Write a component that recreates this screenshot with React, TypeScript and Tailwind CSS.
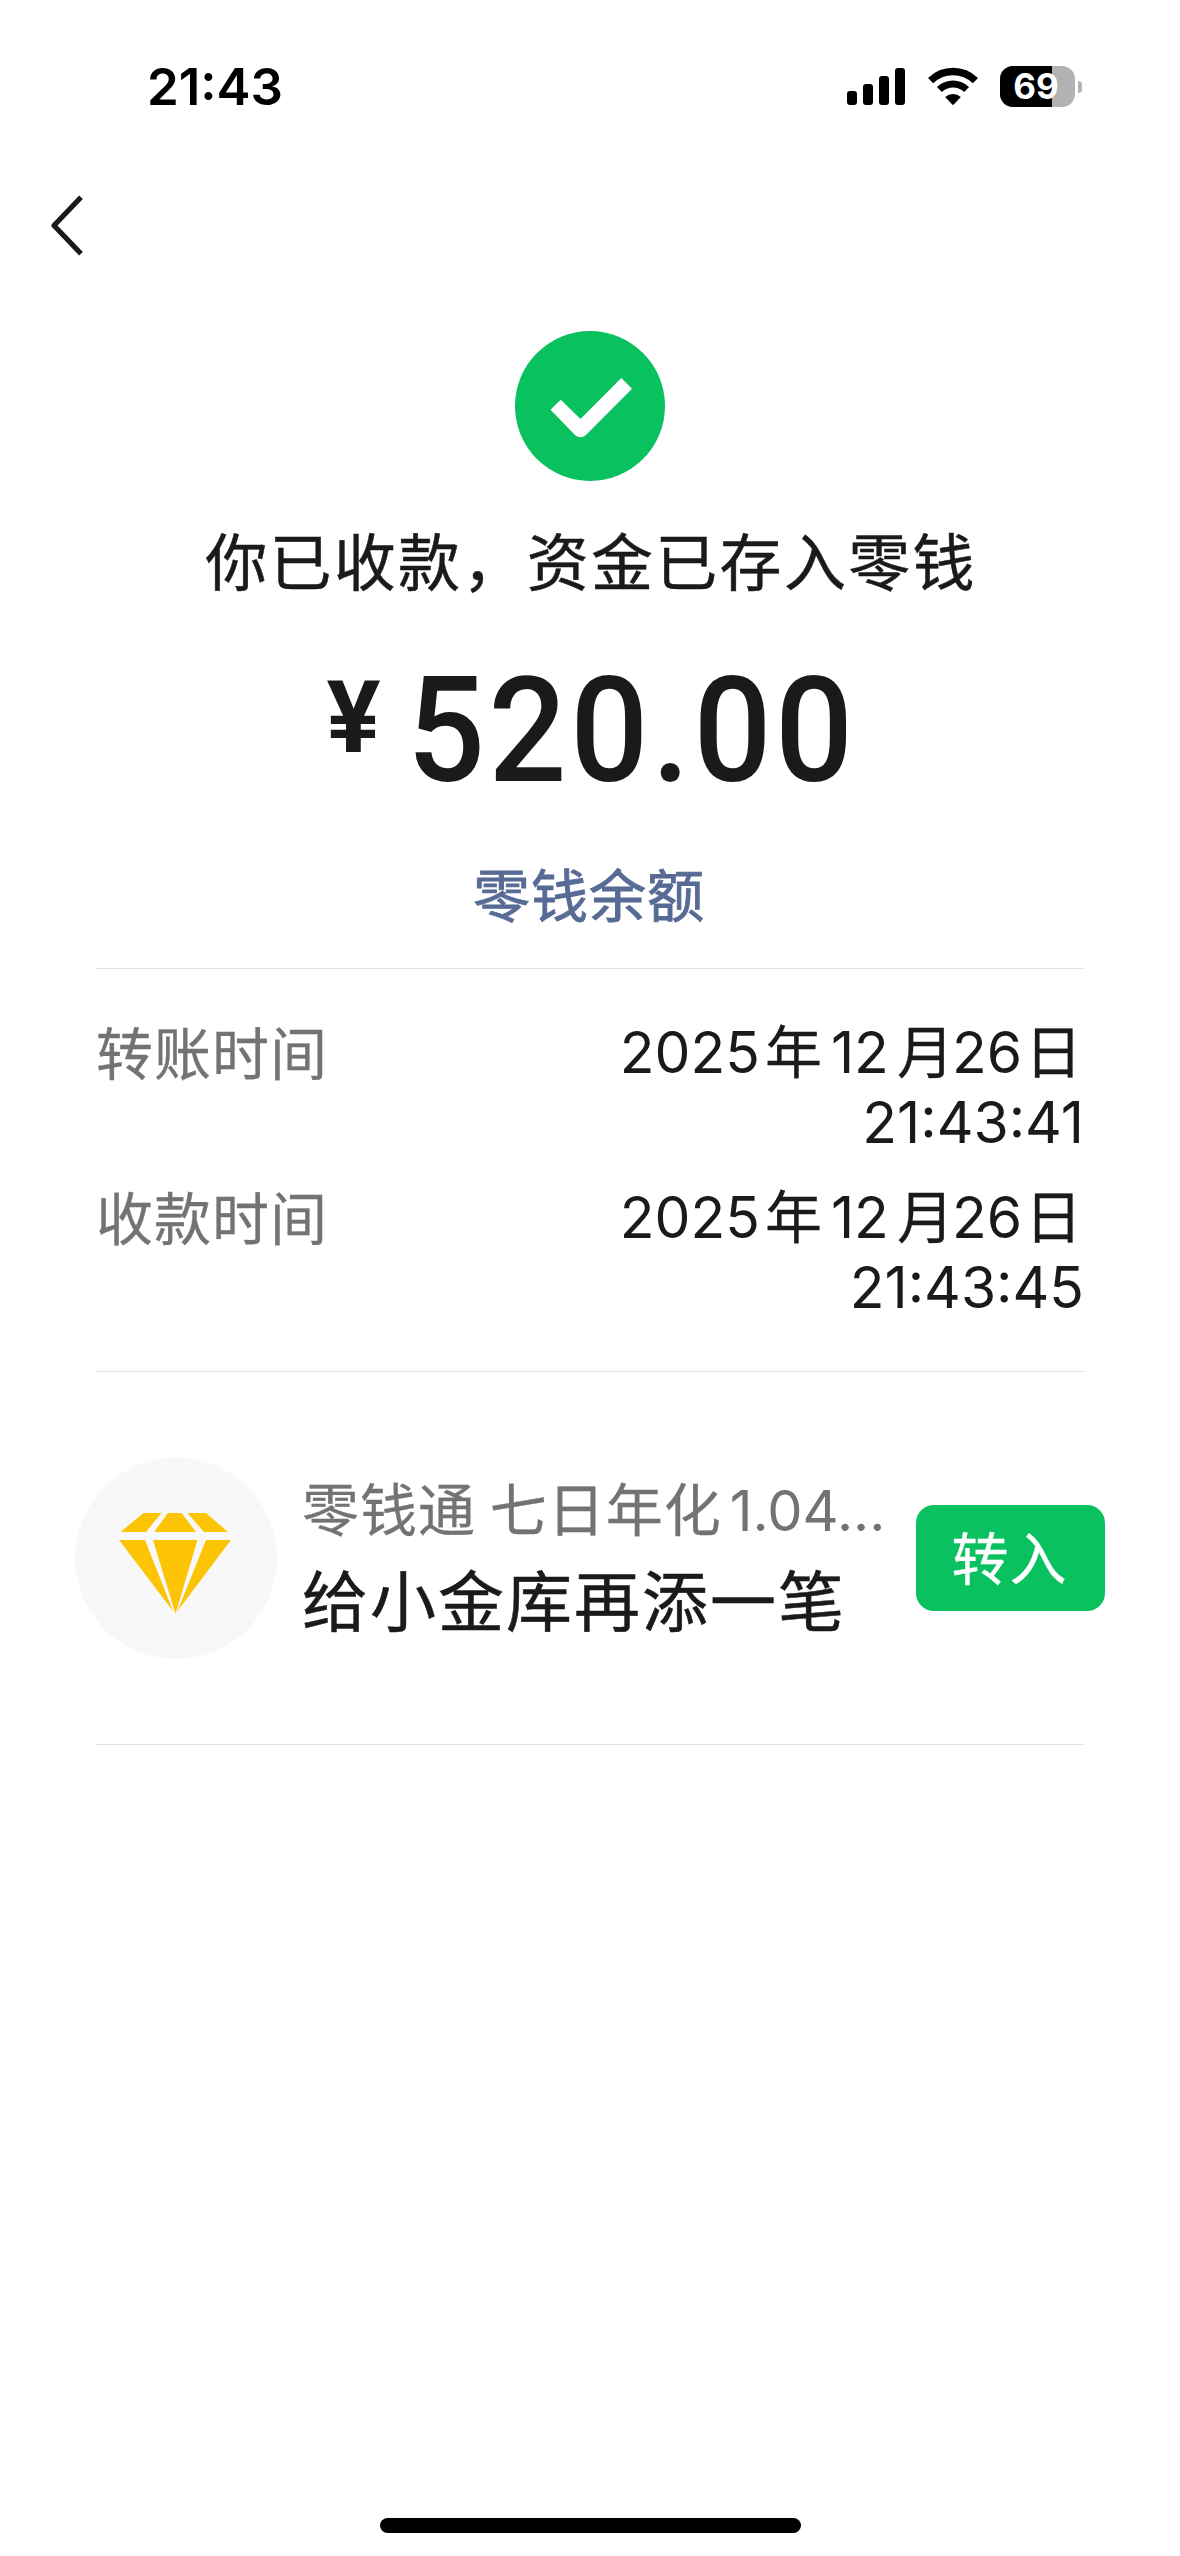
interface RecordRow {
  label: string;
  time: string;
}

const records: RecordRow[] = [
  { label: "转账时间", time: "21:43:41" },
  { label: "收款时间", time: "21:43:45" },
];

const StatusBar = () => (
  <div className="h-[124px] pt-[66px] pl-[147px] pr-[98px] flex items-start justify-between">
    <span className="font-['Inter',sans-serif] font-semibold text-[51px] leading-[42px] text-black">21:43</span>
    <div className="flex items-center">
      {/* Signal */}
      <svg width="59" height="41" viewBox="0 0 59 41" fill="#000">
        <rect x="0" y="25" width="10" height="14" rx="3" />
        <rect x="16" y="18" width="10" height="21" rx="3" />
        <rect x="32" y="10" width="10" height="29" rx="3" />
        <rect x="48" y="2" width="10" height="37" rx="3" />
      </svg>

      {/* Wifi */}
      <svg className="ml-[22px]" width="50" height="41" viewBox="0 0 50 41" fill="none">
        <path d="M2.6 14.6 A32 32 0 0 1 47.4 14.6" stroke="#000" strokeWidth="7.4" />
        <path d="M11.4 23.6 A19.4 19.4 0 0 1 38.6 23.6" stroke="#000" strokeWidth="7" />
        <path d="M17.2 31 A11.5 11.5 0 0 1 32.8 31 L26 38.2 Q25 39.2 24 38.2 Z" fill="#000" />
      </svg>

      {/* Battery */}
      <div className="ml-[22px] relative w-[75px] h-[41px] rounded-[13px] overflow-hidden bg-[#b2b2b2]">
        <div className="w-[52px] h-full bg-black"></div>
        <span className="absolute inset-0 pr-[3px] flex items-center justify-center font-['Inter',sans-serif] font-bold text-[35px] leading-none text-white">69</span>
      </div>
      <div className="ml-[3px] w-[4px] h-[12px] rounded-r-full bg-[#b2b2b2]"></div>
    </div>
  </div>
);

const Divider = () => <div className="mx-[96px] h-px bg-[#e2e2e2]"></div>;

const Row = ({ label, time }: RecordRow) => (
  <div className="flex justify-between">
    <span className="text-[57px] leading-[64px] tracking-[1px] text-[#737373] [-webkit-text-stroke:0.3px]">{label}</span>
    <div className="text-right font-['Inter','Noto_Sans_CJK_SC',sans-serif] text-[57px] leading-[70px] text-[#1a1a1a]">
      <div className="mr-[2px]">
        2025<span className="ml-[5px] mr-[9px] [-webkit-text-stroke:0.3px]">年</span>12
        <span className="ml-[8px] mr-[-2px] [-webkit-text-stroke:0.3px]">月</span>26
        <span className="ml-[3px] [-webkit-text-stroke:0.3px]">日</span>
      </div>
      <div>{time}</div>
    </div>
  </div>
);

const App = () => {
  return (
    <div className="w-[1180px] h-[2556px] bg-white flex flex-col font-['Noto_Sans_CJK_SC',sans-serif] text-[#1a1a1a]">
      <StatusBar />

      <div className="h-[207px] pt-[71px] pl-[51px]">
        <svg width="32" height="61" viewBox="0 0 32 61" fill="none">
          <path d="M30 2.2 L3 30.5 L30 58.8" stroke="#1a1a1a" strokeWidth="5.2" strokeLinejoin="round" />
        </svg>
      </div>

      <div className="flex flex-col items-center">
        <svg width="150" height="150" viewBox="0 0 150 150">
          <circle cx="75" cy="75" r="75" fill="#0ac160" />
          <path d="M35.5 78.7 L45.8 68.7 L65.5 88 L106.3 47 L117 57.7 L71 104 Q65.5 108.5 60 104 Z" fill="#fff" />
        </svg>
        <h1 className="mt-[38px] pl-[2px] text-[62px] leading-[80px] tracking-[2.3px] [-webkit-text-stroke:0.5px]">你已收款，资金已存入零钱</h1>
        <div className="mt-[63px] flex items-start font-['Roboto',sans-serif]">
          <span className="w-[81px] pl-[1px] font-bold text-[101px] leading-[112px]">¥</span>
          <span className="w-[448px] origin-left scale-x-[0.94] whitespace-nowrap font-medium text-[146px] leading-[140px] tracking-[3.8px]">520.00</span>
        </div>
        <a className="mt-[60px] pr-[2px] text-[57px] leading-[60px] tracking-[1px] text-[#576b95] [-webkit-text-stroke:0.9px]">零钱余额</a>
      </div>

      <div className="mt-[46px]">
        <Divider />
      </div>
      <div className="mt-[49px] mx-[96px] flex flex-col gap-[25px]">
        {records.map((record) => (
          <Row key={record.label} {...record} />
        ))}
      </div>
      <div className="mt-[48px]">
        <Divider />
      </div>

      <div className="mt-[85px] px-[75px] flex items-center">
        <div className="w-[202px] h-[202px] pt-[10px] rounded-full bg-[#f8f8f8] flex items-center justify-center">
          <svg className="mr-[2px]" width="112" height="101" viewBox="0 0 112 101" fill="#fdc406">
            <path d="M24.5 0 H42.5 L27 19 H1.5 Z" />
            <path d="M49 0 H62.5 L77 19 H35 Z" />
            <path d="M68.5 0 H87 L109 19 H85 Z" />
            <path d="M0 27 H26 L54 98 Z" />
            <path d="M34 27 H78.5 L56.5 101 Z" />
            <path d="M87 27 H112 L58.5 98 Z" />
          </svg>
        </div>
        <div className="ml-[25px] pb-[13px] flex-1 leading-[86px] whitespace-nowrap">
          <div className="text-[57px] tracking-[1px] text-[#737373] [-webkit-text-stroke:0.3px]">
            零钱通 七日年化
            <span className="ml-[8px] font-['Inter',sans-serif] text-[56px] tracking-normal [-webkit-text-stroke:0px]">1.04...</span>
          </div>
          <div className="text-[66px] tracking-[2px] [-webkit-text-stroke:0.5px]">给小金库再添一笔</div>
        </div>
        <button className="w-[189px] h-[106px] pb-[6px] pr-[2px] rounded-[18px] bg-[#0ac160] text-white text-[57px] tracking-[1px] leading-[100px] [-webkit-text-stroke:0.3px]">转入</button>
      </div>

      <div className="mt-[85px]">
        <Divider />
      </div>

      {/* Home indicator */}
      <div className="mt-auto mb-[23px] mx-auto w-[421px] h-[15px] rounded-full bg-black"></div>
    </div>
  );
};

export default App;
